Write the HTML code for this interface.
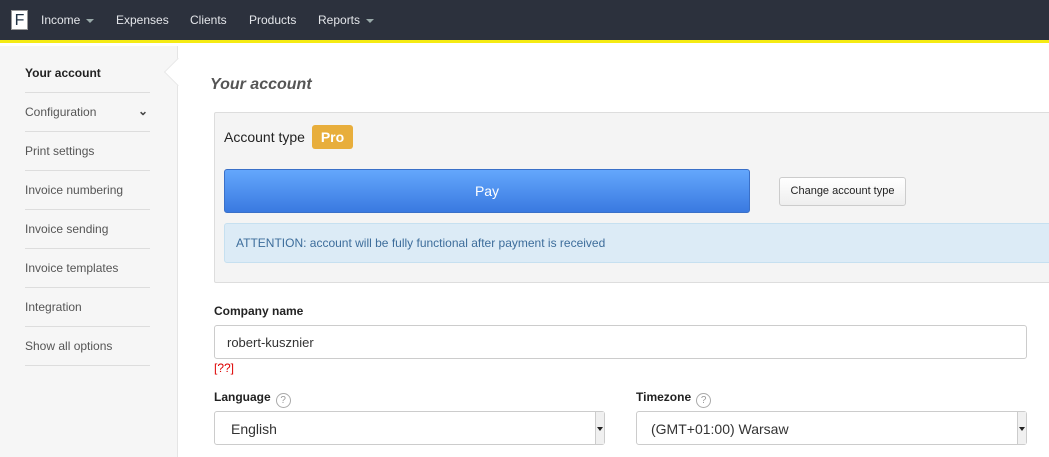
<!DOCTYPE html>
<html><head><meta charset="utf-8"><style>
*{box-sizing:border-box;margin:0;padding:0}
body{width:1049px;height:457px;overflow:hidden;font-family:"Liberation Sans",Arial,sans-serif;background:#fff;position:relative}
.nav{height:43px;background:#2c313d;border-bottom:3px solid #f5eb14;position:relative}
.logo{position:absolute;left:11px;top:10px;width:17px;height:20px;background:#fff;border:1px solid #999;color:#234;font-size:16px;text-align:center;line-height:19px}
.nav a{position:absolute;top:13px;color:#e4e6ea;font-size:12px}
.caret{display:inline-block;border:4px solid transparent;border-top:4px solid #9aa;margin-left:6px;vertical-align:1px;border-bottom:0}
.side{position:absolute;left:0;top:46px;width:178px;height:411px;background:#f6f6f6;border-right:1px solid #e5e5e5}
.side div{position:absolute;left:25px;width:125px;font-size:12px;color:#555;height:39px;line-height:39px;border-bottom:1px solid #ddd}
.ptr{position:absolute;left:168px;top:62px;width:20px;height:20px;background:#fff;border-left:1px solid #e8e8e8;border-bottom:1px solid #e8e8e8;transform:rotate(45deg)}
h1{position:absolute;left:210px;top:76px;font-size:16px;font-style:italic;color:#555;font-weight:bold}
.box{position:absolute;left:214px;top:112px;width:840px;height:171px;background:#f4f4f4;border:1px solid #ddd;border-radius:2px}
.lbl{position:absolute;font-size:12px;font-weight:bold;color:#222}
input,.sel{position:absolute;border:1px solid #ccc;border-radius:3px;background:#fff;font-size:13px;color:#333}
.q{display:inline-block;width:15px;height:15px;border:1px solid #aaa;border-radius:50%;font-size:10px;color:#999;text-align:center;line-height:13px;font-weight:normal;margin-left:5px;vertical-align:-2px}
.arr{position:absolute;right:0;top:0;width:9px;height:100%;border-left:1px solid #ccc;background:#f0f0f0}
.arr:after{content:"";position:absolute;left:1px;top:15px;border:3px solid transparent;border-top:4px solid #222}
</style></head><body>
<div class="nav"><div class="logo">F</div>
<a style="left:41px">Income<span class="caret"></span></a>
<a style="left:116px">Expenses</a><a style="left:190px">Clients</a><a style="left:249px">Products</a>
<a style="left:318px">Reports<span class="caret"></span></a></div>
<div class="side">
<div style="top:8px;color:#222;font-weight:bold">Your account</div>
<div style="top:47px">Configuration<span style="position:absolute;right:2px;top:-1px;font-size:12px;color:#444;font-weight:bold">&#8964;</span></div>
<div style="top:86px">Print settings</div>
<div style="top:125px">Invoice numbering</div>
<div style="top:164px">Invoice sending</div>
<div style="top:203px">Invoice templates</div>
<div style="top:242px">Integration</div>
<div style="top:281px">Show all options</div>
</div>
<div class="ptr"></div>
<h1>Your account</h1>
<div class="box">
<div style="position:absolute;left:9px;top:12px;font-size:14px;color:#222">Account type <span style="display:inline-block;background:#e8ae3c;color:#fff;font-weight:bold;padding:4px 9px;border-radius:3px;margin-left:3px">Pro</span></div>
<div style="position:absolute;left:9px;top:56px;width:526px;height:44px;background:linear-gradient(#64a7fc,#3a79e0);border:1px solid #3a70c8;border-radius:3px;color:#fff;font-size:14px;text-align:center;line-height:42px">Pay</div>
<div style="position:absolute;left:564px;top:64px;width:127px;height:29px;background:linear-gradient(#fff,#eee);border:1px solid #ccc;border-radius:3px;font-size:11px;color:#222;text-align:center;line-height:27px">Change account type</div>
<div style="position:absolute;left:9px;top:110px;width:840px;height:40px;background:#dcebf6;border:1px solid #c6e0f0;border-radius:3px;color:#3d6d9b;font-size:12px;line-height:38px;padding-left:11px">ATTENTION: account will be fully functional after payment is received</div>
</div>
<div class="lbl" style="left:214px;top:304px">Company name</div>
<input style="left:214px;top:325px;width:813px;height:34px;padding-left:12px" value="robert-kusznier">
<div style="position:absolute;left:214px;top:361px;color:#d00;font-size:12px">[??]</div>
<div class="lbl" style="left:214px;top:390px">Language<span class="q">?</span></div>
<div class="lbl" style="left:636px;top:390px">Timezone<span class="q">?</span></div>
<div class="sel" style="left:214px;top:411px;width:391px;height:34px;padding:9px 0 0 16px;font-size:14px">English<div class="arr"></div></div>
<div class="sel" style="left:636px;top:411px;width:391px;height:34px;padding:9px 0 0 14px;font-size:14px">(GMT+01:00) Warsaw<div class="arr"></div></div>
</body></html>
